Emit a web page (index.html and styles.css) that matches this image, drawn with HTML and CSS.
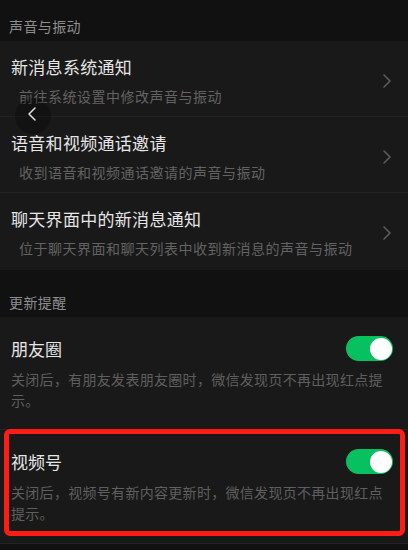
FILE: index.html
```html
<!DOCTYPE html>
<html lang="zh-CN">
<head>
<meta charset="utf-8">
<title>新消息通知</title>
<link rel="stylesheet" href="styles.css">
</head>
<body>
<div class="page">
  <div class="group-title group-title-first">声音与振动</div>
  <div class="card card-links">
    <div class="link-row">
      <div class="link-text">
        <div class="row-title">新消息系统通知</div>
        <div class="link-sub">前往系统设置中修改声音与振动</div>
      </div>
      <svg class="chevron" width="8" height="14" viewBox="0 0 8 14"><path d="M1 1 L7 7 L1 13" fill="none" stroke="#5c5c5c" stroke-width="1.6" stroke-linecap="round" stroke-linejoin="round"/></svg>
    </div>
    <div class="link-row">
      <div class="link-text">
        <div class="row-title">语音和视频通话邀请</div>
        <div class="link-sub">收到语音和视频通话邀请的声音与振动</div>
      </div>
      <svg class="chevron" width="8" height="14" viewBox="0 0 8 14"><path d="M1 1 L7 7 L1 13" fill="none" stroke="#5c5c5c" stroke-width="1.6" stroke-linecap="round" stroke-linejoin="round"/></svg>
    </div>
    <div class="link-row">
      <div class="link-text">
        <div class="row-title">聊天界面中的新消息通知</div>
        <div class="link-sub">位于聊天界面和聊天列表中收到新消息的声音与振动</div>
      </div>
      <svg class="chevron" width="8" height="14" viewBox="0 0 8 14"><path d="M1 1 L7 7 L1 13" fill="none" stroke="#5c5c5c" stroke-width="1.6" stroke-linecap="round" stroke-linejoin="round"/></svg>
    </div>
  </div>

  <div class="group-title group-title-second">更新提醒</div>
  <div class="card">
    <div class="switch-row">
      <div class="switch-head">
        <div class="row-title">朋友圈</div>
        <div class="toggle"><span class="knob"></span></div>
      </div>
      <div class="switch-desc">关闭后，有朋友发表朋友圈时，微信发现页不再出现红点提示。</div>
    </div>
    <div class="switch-row switch-row-marked">
      <div class="switch-head">
        <div class="row-title">视频号</div>
        <div class="toggle"><span class="knob"></span></div>
      </div>
      <div class="switch-desc">关闭后，视频号有新内容更新时，微信发现页不再出现红点提示。</div>
      <div class="mark-box"></div>
    </div>
  </div>

  <div class="back-btn">
    <svg width="10" height="14" viewBox="0 0 10 14"><path d="M8 1 L2 7 L8 13" fill="none" stroke="#e0e0e0" stroke-width="1.5" stroke-linecap="round" stroke-linejoin="round"/></svg>
  </div>
</div>
</body>
</html>
```
FILE: styles.css
```css
html, body {
  margin: 0;
  padding: 0;
  background: #111111;
}

body {
  font-family: "Noto Sans CJK SC", "Noto Sans", sans-serif;
  width: 408px;
  height: 550px;
  overflow: hidden;
}

.page {
  position: relative;
}

.group-title {
  color: #8e8e8e;
  font-size: 14px;
  line-height: 18px;
  letter-spacing: 0.4px;
  padding: 0 9px 6px;
}

.group-title-first {
  padding-top: 17px;
}

.group-title-second {
  padding-top: 23px;
}

.card {
  background: #191919;
}

.card-links {
  padding-bottom: 2px;
}

.link-row {
  display: flex;
  align-items: center;
  padding: 15px 17px 11px 11px;
  border-bottom: 1px solid #232323;
}

.link-row:last-child {
  border-bottom: none;
}

.link-text {
  flex: 1;
}

.row-title {
  color: #e6e6e6;
  font-size: 17px;
  line-height: 22px;
  letter-spacing: 0.3px;
}

.link-sub {
  color: #636363;
  font-size: 14px;
  line-height: 18px;
  letter-spacing: 0.5px;
  margin-top: 9px;
  padding-left: 8px;
}

.chevron {
  display: block;
  flex: none;
}

.switch-row {
  position: relative;
  padding: 19px 15px 18px 11px;
  border-bottom: 1px solid #242424;
}

.switch-row-marked {
  padding-bottom: 19px;
}

.switch-head {
  display: flex;
  align-items: center;
  justify-content: space-between;
  height: 25px;
}

.switch-head .row-title {
  letter-spacing: 0;
}

.toggle {
  position: relative;
  width: 47px;
  height: 25px;
  border-radius: 13px;
  background: #07c160;
}

.knob {
  position: absolute;
  top: 1.5px;
  right: 1.5px;
  width: 22px;
  height: 22px;
  border-radius: 50%;
  background: #ffffff;
}

.switch-desc {
  color: #5f5f5f;
  font-size: 14px;
  line-height: 21px;
  letter-spacing: 0.3px;
  margin-top: 8px;
}

.mark-box {
  position: absolute;
  top: -1px;
  left: 4px;
  right: 3px;
  bottom: 7px;
  border: 5px solid #ff1c14;
  border-radius: 6px;
}

.back-btn {
  position: absolute;
  left: 15px;
  top: 98px;
  width: 36px;
  height: 36px;
  border-radius: 50%;
  background: rgba(0, 0, 0, 0.28);
  display: flex;
  align-items: center;
  justify-content: center;
}

.back-btn svg {
  display: block;
  margin-left: -2px;
  margin-top: -5px;
}
```
